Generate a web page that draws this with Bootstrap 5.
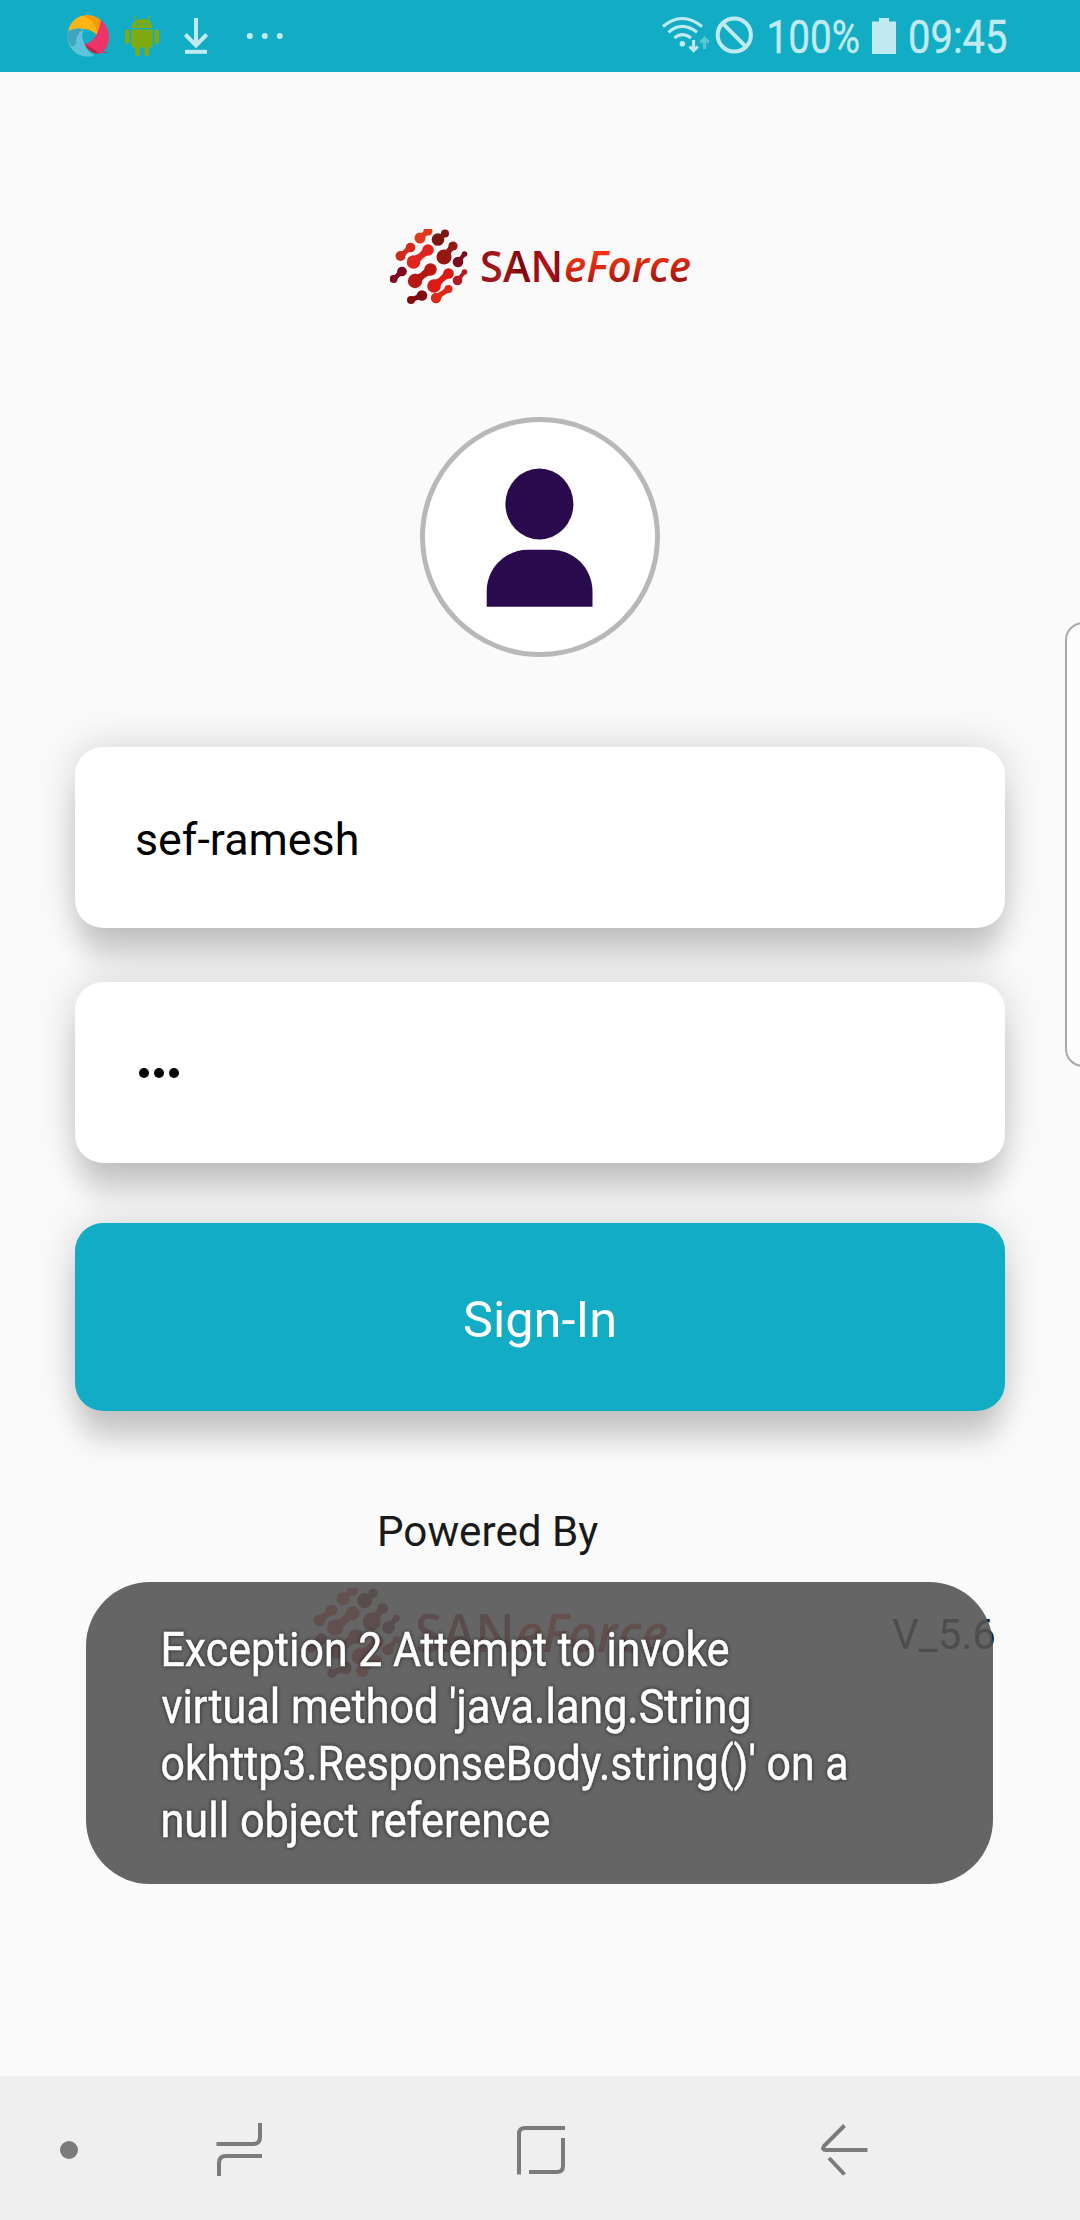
<!DOCTYPE html>
<html lang="en">
<head>
<meta charset="utf-8">
<meta name="viewport" content="width=device-width, initial-scale=1">
<title>SANeForce Sign-In</title>
<link href="https://cdn.jsdelivr.net/npm/bootstrap@5.3.0/dist/css/bootstrap.min.css" rel="stylesheet">
<style>
body{font-family:Roboto,"Noto Sans",sans-serif;background:#fafafa;width:1080px;height:2220px;overflow:hidden;color:#000}
svg{display:block;flex:none;overflow:visible}
svg text{font-family:Roboto,"Noto Sans",sans-serif}
.status-bar{height:72px;background:#12acc4;padding:0 73px 0 67px}
.g14{margin-left:14px}.g24{margin-left:24px}.g38{margin-left:38px}.g12{margin-left:12px}.g2{margin-left:2px}
.login-area{padding:157px 75px 0;height:2004px}
.avatar{width:240px;height:240px;border:5px solid #b8b8b8;margin-top:113px}
.login-form{margin-top:90px}
.field-box,.sign-btn{border:0;border-radius:28px;box-shadow:0 34px 28px -5px rgba(0,0,0,.16),0 0 40px rgba(0,0,0,.16)}
.field-box{height:181px;padding:4px 60px 0;font-size:44.8px;color:#000;background:#fff;margin-bottom:54px}
.pass-dots{gap:5px;padding-top:0}
.pass-dots i{width:10px;height:10px;border-radius:50%;background:#000}
.sign-btn{height:188px;font-size:50.5px;background:#12acc4;color:#fff;margin-top:6px;padding-bottom:1px}
.powered{font-size:42.2px;line-height:50px;margin-top:96px;color:#1a1a1a;padding-left:302px}
.brand-row{margin-top:31px;height:90px;padding-left:232px}
.version{font-size:42px;line-height:50px;margin-left:225px;color:#111;padding-top:22px;white-space:nowrap}
.toast-msg{left:86px;top:1582px;width:907px;height:302px;border-radius:64px;background:rgba(84,84,84,.9)}
.toast-msg text{font-size:47.5px;fill:#fff;stroke:#fff;stroke-width:.5px}
.toast-msg svg{filter:drop-shadow(0 0 2px rgba(0,0,0,.65))}
.edge-panel{left:1065px;top:622px;width:40px;height:445px;border:2px solid #aaa;border-radius:18px;background:#fdfdfd}
.nav-keys{height:144px;background:#efefef}
.soft{fill:#c0eaf0}
</style>
</head>
<body class="position-relative d-flex flex-column">
<svg width="0" height="0" class="position-absolute" aria-hidden="true">
  <defs>
    <linearGradient id="san" x1="0" x2="1"><stop offset="0" stop-color="#8f1020"/><stop offset=".25" stop-color="#a81c1c"/><stop offset=".5" stop-color="#7c0508"/><stop offset=".8" stop-color="#b5121c"/><stop offset="1" stop-color="#7e0a10"/></linearGradient>
    <linearGradient id="force" x1="0" y1="0" x2=".15" y2="1"><stop offset=".25" stop-color="#ff3510"/><stop offset=".55" stop-color="#d92a12"/><stop offset=".85" stop-color="#a5150e"/></linearGradient>
    <symbol id="brand" viewBox="0 0 300 75" preserveAspectRatio="none">
      <g id="globe"></g>
      <g font-size="43.5" font-weight="600">
        <text x="90" y="53" style="font-family:'Open Sans',sans-serif" textLength="83" lengthAdjust="spacingAndGlyphs" fill="url(#san)">SAN</text>
        <text x="174" y="53" style="font-family:'Open Sans',sans-serif" font-style="italic" textLength="127" lengthAdjust="spacingAndGlyphs" fill="url(#force)">eForce</text>
      </g>
    </symbol>
  </defs>
</svg>

<header class="status-bar d-flex align-items-center">
  <svg width="44" height="72" viewBox="67 0 44 72">
    <path d="M68 32C70 20 80 14 90 15.500Q97 16 101 21Q103 32 97 35C91 28 80 27 68 32Z" fill="#fdb515"/>
    <path d="M84 15.500Q95 15 101 21Q102 32 97 35Q97 22 84 15.500Z" fill="#f79a08"/>
    <path d="M101 20Q110 28 109 40Q106 52 100 53.500Q91 54 84 44Q97 43 101 20Z" fill="#ee336b"/>
    <path d="M84 44Q92 47 99 53.500Q90 54 84 44Z" fill="#c81f45"/>
    <path d="M67 32Q74 27 84 29Q80 35 85 45Q88 53 95 55Q87 59 77 54Q66 46 67 32Z" fill="#5fc3dc"/>
    <path d="M67 32Q74 27 84 29Q75 34 76 44L72 47Q66 40 67 32Z" fill="#3fa5bd"/>
    <path d="M103 52h4v1h-4z" fill="#d35"/>
  </svg>
  <svg class="g14" width="35" height="72" viewBox="125 0 35 72" fill="#80ab0f">
    <path d="M131.500 28C132 23 135 20 139 19.200H146C150 20 152 23 152.300 28Z"/>
    <path d="M136 20L133.500 16M147.500 20L149.500 16" stroke="#80ab0f" stroke-width="1.200"/>
    <path d="M131.500 29.500H152.500V45Q152.500 47.500 150 47.500H149V53.500Q149 56 146.700 56T144.400 53.500V47.500H140V53.500Q140 56 137.600 56T135.300 53.500V47.500H134Q131.500 47.500 131.500 45Z"/>
    <rect x="125" y="29.500" width="4.600" height="14.500" rx="2.300"/><rect x="154.500" y="29.500" width="4.600" height="14.500" rx="2.300"/>
    <circle cx="138" cy="24.300" r="1.200" fill="#12acc4"/><circle cx="146" cy="24.300" r="1.200" fill="#12acc4"/>
  </svg>
  <svg class="g24" width="25" height="72" viewBox="184 0 25 72" fill="none" stroke="#c0eaf0" stroke-width="4"><path d="M196 18V46"/><path d="M185.300 34.500L196 45.500L206.700 34.500"/><path d="M185 51.800H207"/></svg>
  <svg class="g38" width="37" height="72" viewBox="247 0 37 72"><g class="soft"><circle cx="249.800" cy="36" r="3"/><circle cx="264.800" cy="36" r="3"/><circle cx="279.800" cy="36" r="3"/></g></svg>
  <svg class="ms-auto" width="52" height="72" viewBox="660 0 52 72" fill="none" stroke="#c0eaf0" stroke-width="3">
    <path d="M663 26.500Q682 10.500 702 26.500M668.500 32.300Q682 20.500 697 32.300M674.500 38Q682 31.300 691 38"/>
    <circle cx="682.300" cy="43.700" r="2.800" class="soft" stroke="none"/>
    <path d="M693.600 40V50M689.500 46.500L693.600 50.700L697.800 46.500"/>
    <path d="M704.600 49V39M700.500 42.500L704.600 38.200L708.800 42.500" stroke="#5cc6d6"/>
  </svg>
  <svg class="g2" width="40" height="72" viewBox="714 0 40 72" fill="none" stroke="#c0eaf0" stroke-width="4"><circle cx="734.300" cy="35" r="16.600"/><path d="M722.500 23.200L746 46.800"/></svg>
  <svg class="g12" width="94" height="72" viewBox="766 0 94 72"><text class="soft" x="766.500" y="53" font-size="45.500" textLength="93.500" lengthAdjust="spacingAndGlyphs" stroke="#c0eaf0" stroke-width=".4">100%</text></svg>
  <svg class="g12" width="25" height="72" viewBox="872 0 25 72"><path class="soft" d="M879 18H889V21.500H896V54H872V21.500H879Z"/></svg>
  <svg class="g12" width="98" height="72" viewBox="909 0 98 72"><text class="soft" x="908" y="53" font-size="45.500" textLength="99.500" lengthAdjust="spacingAndGlyphs" stroke="#c0eaf0" stroke-width=".4">09:45</text></svg>
</header>

<main class="login-area">
  <svg class="mx-auto" width="300" height="75" role="img" aria-label="SANeForce"><use href="#brand" width="300" height="75"/></svg>
  <div class="avatar rounded-circle bg-white mx-auto">
    <svg width="230" height="230" viewBox="425 422 230 230" fill="#280a4d"><ellipse cx="539.400" cy="504" rx="34" ry="35.500"/><path d="M486.700 606.700V591C487 567 506 549.800 528 549.800H551C573 549.800 592 567 592.500 591V606.700Z"/></svg>
  </div>
  <form class="login-form">
    <div class="field-box d-flex align-items-center">sef-ramesh</div>
    <div class="field-box pass-dots d-flex align-items-center" aria-label="Password"><i class="ms-1"></i><i></i><i></i></div>
    <button type="button" class="sign-btn btn w-100">Sign-In</button>
  </form>
  <div class="powered">Powered By</div>
  <div class="brand-row d-flex">
    <svg width="360" height="90"><use href="#brand" width="360" height="90"/></svg>
    <div class="version">V_5.6</div>
  </div>
</main>

<nav class="nav-keys">
  <svg width="1080" height="144" viewBox="0 2076 1080 144" fill="none" stroke="#7b7b7b" stroke-width="4">
    <circle cx="69" cy="2150" r="9" fill="#7b7b7b" stroke="none"/>
    <path d="M216.500 2144H253Q260 2144 260 2137V2123M219 2176V2163Q219 2156 226 2156H262"/>
    <path d="M519 2174.500V2134Q519 2128 525 2128H565M563 2138V2166Q563 2172 557 2172H529"/>
    <path d="M844.500 2125.500L824 2146Q821.500 2150 826 2150H867.500M829 2158L844.500 2174.500"/>
  </svg>
</nav>

<aside class="edge-panel position-absolute"></aside>
<div class="toast-msg position-absolute" role="alert">
  <svg width="907" height="302" viewBox="86 1582 907 302">
    <text x="160.500" y="1666" textLength="569" lengthAdjust="spacingAndGlyphs">Exception 2 Attempt to invoke</text>
    <text x="161.500" y="1723" textLength="590" lengthAdjust="spacingAndGlyphs">virtual method 'java.lang.String</text>
    <text x="160.500" y="1780" textLength="688" lengthAdjust="spacingAndGlyphs">okhttp3.ResponseBody.string()' on a</text>
    <text x="160.500" y="1837" textLength="390" lengthAdjust="spacingAndGlyphs">null object reference</text>
  </svg>
</div>

<script src="https://cdn.jsdelivr.net/npm/bootstrap@5.3.0/dist/js/bootstrap.bundle.min.js"></script>
<script>
// Globe links: big end x,y,r, small end x,y,r, colour
const links=[
 [30,9,5.5,38,2,4.5,'#e03a1c'],[48,10.5,6.3,55,4.5,4,'#7d1712'],[10.5,27,5,20.5,18.500,4.800,'#cf2a1c'],
 [23.500,33,6.8,38,21,5.8,'#e02420'],[54,28,7.5,63,17,4.6,'#961612'],[68,33,5.3,74.5,25,2.8,'#7c0d20'],
 [3.5,50,4,12,42.5,4.8,'#7d0820'],[25,52,7.2,40.500,40.5,6.2,'#b81814'],[44,57,6.8,58.500,44.5,5.3,'#dc1b16'],
 [67.500,51.5,4.800,74.5,43,2.8,'#b51c24'],[21,71,4,32,66.500,5.3,'#820c12'],[46,69,5.2,58.500,60,4,'#dd2a16']];
document.getElementById('globe').innerHTML=links.map(([a,b,r,c,d,s,col])=>{
  const l=Math.hypot(c-a,d-b),nx=-(d-b)/l,ny=(c-a)/l,mx=(a+c)/2,my=(b+d)/2;
  const p=(x,y,k)=>(x+nx*k).toFixed(1)+' '+(y+ny*k).toFixed(1);
  return `<g fill="${col}"><circle cx="${a}" cy="${b}" r="${r}"/><circle cx="${c}" cy="${d}" r="${s}"/><path d="M${p(a,b,r*.9)}Q${p(mx,my,.6)} ${p(c,d,s*.9)}L${p(c,d,-s*.9)}Q${p(mx,my,-.6)} ${p(a,b,-r*.9)}Z"/></g>`;
}).join('');
</script>
</body>
</html>
